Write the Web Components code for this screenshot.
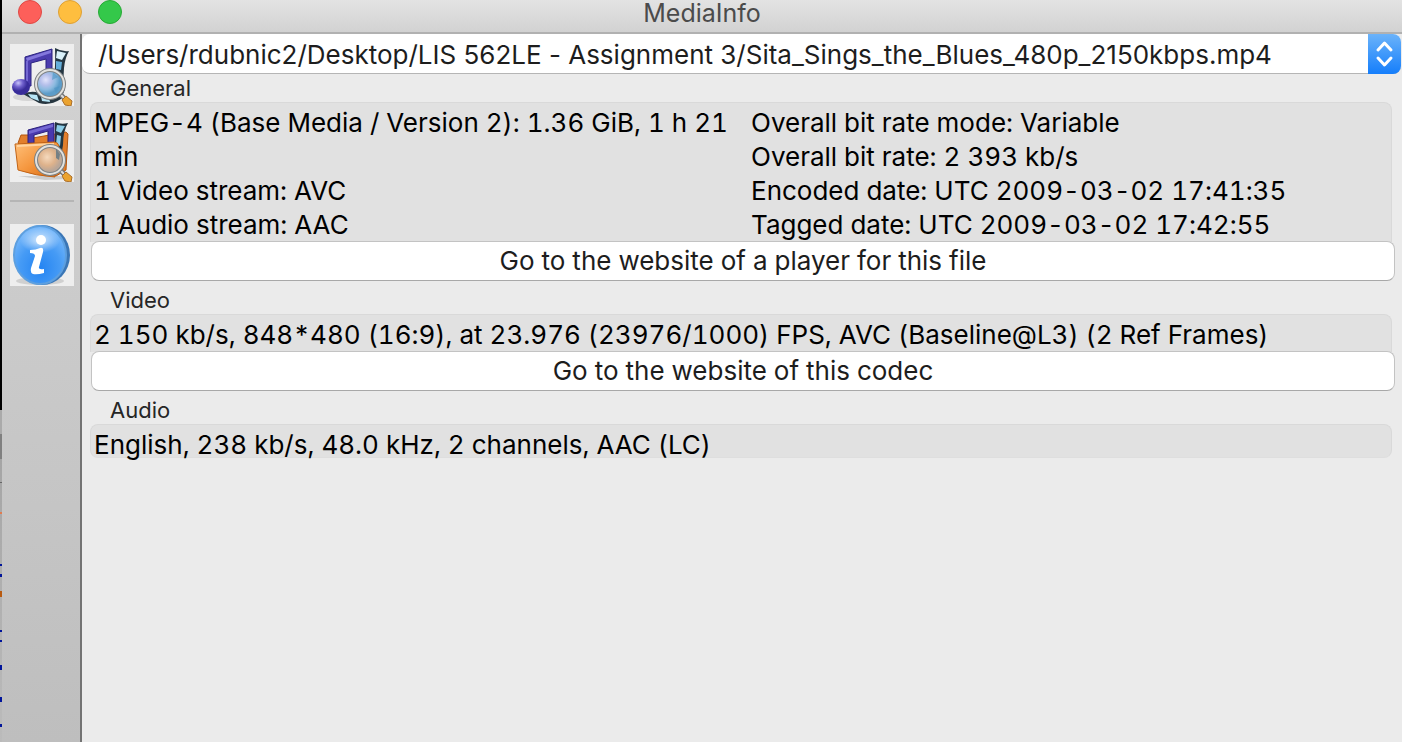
<!DOCTYPE html>
<html lang="en">
<head>
<meta charset="utf-8">
<title>MediaInfo</title>
<style>
html, body { height: 100%; margin: 0; }
body { font-family: Inter, Roboto, "Liberation Sans", sans-serif; font-size: 26px; font-variant-numeric: tabular-nums;
  font-variant-ligatures: no-contextual; color: #000; }
</style>
</head>
<body>
<media-window>
  <window-bar slot="bar">MediaInfo</window-bar>
  <tool-rail slot="rail"></tool-rail>
  <file-picker>/Users/rdubnic2/Desktop/LIS 562LE - Assignment 3/Sita_Sings_the_Blues_480p_2150kbps.mp4</file-picker>
  <info-group label="General" action="Go to the website of a player for this file">
    <info-lines>
      <div>MPEG-4 (Base Media / Version 2): 1.36 GiB, 1 h 21 min</div>
      <div>1 Video stream: AVC</div>
      <div>1 Audio stream: AAC</div>
    </info-lines>
    <info-lines>
      <div>Overall bit rate mode: Variable</div>
      <div>Overall bit rate: 2 393 kb/s</div>
      <div>Encoded date: UTC 2009-03-02 17:41:35</div>
      <div>Tagged date: UTC 2009-03-02 17:42:55</div>
    </info-lines>
  </info-group>
  <info-group label="Video" action="Go to the website of this codec" single>
    <info-lines><div>2 150 kb/s, 848*480 (16:9), at 23.976 (23976/1000) FPS, AVC (Baseline@L3) (2 Ref Frames)</div></info-lines>
  </info-group>
  <info-group label="Audio" single>
    <info-lines><div>English, 238 kb/s, 48.0 kHz, 2 channels, AAC (LC)</div></info-lines>
  </info-group>
</media-window>
<script>
class ShadowElement extends HTMLElement {
  connectedCallback() {
    if (this.shadowRoot) return;
    this.attachShadow({ mode: "open" }).innerHTML = this.view();
  }
}

customElements.define("media-window", class extends ShadowElement {
  view() { return `
    <style>
      :host { display: grid; grid-template: auto 1fr / 2px 80px 1fr; min-height: 100vh; background: #ebebeb; }
      .desk { grid-row: 1 / 3; background:
        linear-gradient(#00149a,#00149a) 0 564px/2px 2px no-repeat,
        linear-gradient(#00149a,#00149a) 0 574px/2px 3px no-repeat,
        linear-gradient(#b85a10,#b85a10) 0 591px/2px 6px no-repeat,
        linear-gradient(#00149a,#00149a) 0 630px/2px 2px no-repeat,
        linear-gradient(#00149a,#00149a) 0 640px/2px 2px no-repeat,
        linear-gradient(#00149a,#00149a) 0 665px/2px 5px no-repeat,
        linear-gradient(#00149a,#00149a) 0 697px/2px 5px no-repeat,
        linear-gradient(#00149a,#00149a) 0 724px/2px 3px no-repeat,
        linear-gradient(#e07b50,#e07b50) 0 512px/2px 2px no-repeat,
        linear-gradient(#666,#666) 0 482px/2px 1px no-repeat,
        linear-gradient(#000 410px,#aaa 410px,#aaa 434px,#808080 434px,#808080 459px,#a5a5a5 459px,#bbb); }
      .bar { grid-column: 2 / 4; }
      .rail { display: grid; }
      main { min-width: 0; padding-bottom: 20px; }
    </style>
    <div class="desk"></div>
    <div class="bar"><slot name="bar"></slot></div>
    <div class="rail"><slot name="rail"></slot></div>
    <main><slot></slot></main>`; }
});

customElements.define("window-bar", class extends ShadowElement {
  view() { return `
    <style>
      :host { display: grid; grid-template-columns: 1fr auto 1fr; height: 34px; box-sizing: border-box;
        border-bottom: 2px solid #b1b1b1; background: linear-gradient(#e3e3e3, #d2d2d2); color: #4b4b4b; }
      .lights { display: flex; gap: 16px; padding-left: 16px; }
      button { width: 24px; height: 24px; padding: 0; border-radius: 50%; border: 1px solid; }
      .close { background: #fd5f5a; border-color: #df4844; }
      .min { background: #febe3f; border-color: #dea034; }
      .max { background: #34c84a; border-color: #27aa35; }
      h1 { margin: 0; font-size: 25px; font-weight: 400; line-height: 26px; }
    </style>
    <div class="lights">
      <button class="close" aria-label="Close"></button>
      <button class="min" aria-label="Minimize"></button>
      <button class="max" aria-label="Zoom"></button>
    </div>
    <h1><slot></slot></h1>`; }
});

const film = `
  <path d="M45 4q7 4 14 3-4 7-5 17l-1 18-12 4q5-12 4-42z" fill="#243642"/>
  <path d="m47 7 9 2-4 7-6-2z" fill="#d9f1fa"/><path d="m46 17 6 1-1 8-5-1zM46 28l5 1-1 8-5-1z" fill="#64aeda"/>`;
const loupe = glass => `
  <path d="m50 50 5 5" stroke="#777" stroke-width="5"/>
  <path d="m50 50 5 5" stroke="#ddd" stroke-width="2"/>
  <path d="m56 52 6 5-1 5-6-1-3-5z" fill="#eba32f" stroke="#a96e2b"/>
  <circle cx="40" cy="40" r="14" fill="url(#${glass})" stroke="#7d8183" stroke-width="4"/>
  <circle cx="40" cy="40" r="14" fill="none" stroke="#e2e2df" stroke-width="2"/>`;

customElements.define("tool-rail", class extends ShadowElement {
  view() { return `
    <style>
      :host { display: flex; flex-direction: column; box-sizing: border-box; padding: 10px 6px 0 8px;
        border-right: 2px solid #737373; background: linear-gradient(#d3d3d3, #bebebe); }
      button { display: block; width: 64px; height: 62px; padding: 0; border: 0; background: #eee; flex: none; }
      .folder { margin-top: 14px; }
      hr { width: 64px; height: 2px; margin: 18px 0 22px; border: 0; background: #b5b5b5; flex: none; }
      svg { display: block; width: 64px; height: 62px; }
    </style>
    <button aria-label="Open file">
      <svg viewBox="0 0 64 62">
        <defs>
          <radialGradient id="lens" cx=".35" cy=".35"><stop offset="0" stop-color="#e2e4fb"/><stop offset=".4" stop-color="#b4bfea"/><stop offset=".7" stop-color="#8dbbe0"/><stop offset="1" stop-color="#5c9cc8"/></radialGradient>
          <radialGradient id="ball" cx=".35" cy=".25"><stop offset="0" stop-color="#c9c3fa"/><stop offset=".5" stop-color="#7061cd"/><stop offset="1" stop-color="#382c99"/></radialGradient>
        </defs>
        <ellipse cx="18" cy="53" rx="15" ry="4" fill="#d5d5d5"/>
        ${film}
        <path d="M13 50q9-4 16-1 14 6 26-4l-4 10q-11 7-22 4z" fill="#263640"/>
        <path d="m18 50 9 1 2 6-8-3zM31 52l8 2 1 4-8-1z" fill="#b7e5f6"/>
        <path d="M15 13 42 5v35h-6V15l-15 4v23h-6z" fill="#4b3cae" stroke="#2b2381"/>
        <path d="M16 14 41 6v3L17 17z" fill="#8377dc"/>
        <path d="M17 17v22" stroke="#7468d2" stroke-width="2"/>
        <ellipse cx="11" cy="43" rx="9" ry="8" fill="url(#ball)"/>
        ${loupe("lens")}
        <path d="m43 28 5 5-6 3zM44 44l6-2-4 7z" fill="#4d94c4" opacity=".6"/>
      </svg>
    </button>
    <button class="folder" aria-label="Open folder">
      <svg viewBox="0 0 64 62">
        <defs>
          <radialGradient id="warm-lens" cx=".4" cy=".4"><stop offset="0" stop-color="#f5d9bd"/><stop offset=".6" stop-color="#deb28b"/><stop offset="1" stop-color="#b9a698"/></radialGradient>
          <linearGradient id="front" x1="0" y1="0" x2="1" y2="1"><stop offset="0" stop-color="#ffc17b"/><stop offset=".5" stop-color="#f5973f"/><stop offset="1" stop-color="#d5660f"/></linearGradient>
        </defs>
        <path d="M8 56h42l7 3-22 1z" fill="#ccc"/>
        <path d="m8 23 3-8h9l3 3 33-6 2 2-2 36-10 6z" fill="#e27f2c" stroke="#b4560f"/>
        <path d="M18 10 44 3v20h-6V11l-14 4v8h-6z" fill="#4939ae" stroke="#2c217c"/>
        <path d="M19 11 43 4v3L19 14z" fill="#7468d2"/>
        <path d="M45 2q6 3 13 1-5 8-5 22l-2 12q-6-4-6-14z" fill="#243642"/>
        <path d="m47 5 8 1-4 7-5-2zM47 15l4 1-1 10-4-2z" fill="#8bcde8"/>
        <path d="m5 24 39-2q4 0 5 4l-4 31q-19-1-37-7z" fill="url(#front)" stroke="#c26417"/>
        <path d="m7 26 37-2" stroke="#ffd4a0" stroke-width="2"/>
        ${loupe("warm-lens")}
        <path d="m46 29 4 5-1 6-3-2z" fill="#4f6c80" opacity=".7"/>
      </svg>
    </button>
    <hr>
    <button aria-label="About">
      <svg viewBox="0 0 64 62">
        <defs>
          <radialGradient id="blue" cx=".5" cy=".72" r=".65"><stop offset="0" stop-color="#2484f2"/><stop offset=".6" stop-color="#469bf5"/><stop offset="1" stop-color="#72b5fa"/></radialGradient>
          <radialGradient id="shine"><stop offset="0" stop-color="#fff" stop-opacity=".75"/><stop offset="1" stop-color="#fff" stop-opacity="0"/></radialGradient>
        </defs>
        <ellipse cx="30" cy="57" rx="24" ry="4" fill="#d0d0d0"/>
        <ellipse cx="32" cy="31" rx="28" ry="30" fill="#3a76b6"/>
        <ellipse cx="30" cy="31" rx="26" ry="29" fill="url(#blue)" stroke="#5d9fdf" stroke-width="2"/>
        <ellipse cx="30" cy="16" rx="20" ry="13" fill="url(#shine)"/>
        <circle cx="31" cy="16" r="5" fill="#fff"/>
        <path d="M20 26q6 0 10-2 4-1 3 4l-4 15q-1 3 5 2v4q-7 2-11 1-3-1-2-6l4-12q0-3-5-3z" fill="#fff"/>
      </svg>
    </button>`; }
});

customElements.define("file-picker", class extends ShadowElement {
  view() { return `
    <style>
      :host { display: block; position: relative; height: 40px; margin-right: 1px; }
      select { appearance: none; display: block; width: 100%; height: 40px; padding: 1px 40px 0 16px; margin: 0;
        border: 0; border-bottom: 1px solid #b5b5b5; border-radius: 8px; background: #fff; color: #1d1d1d;
        font: inherit; font-variant-numeric: proportional-nums; }
      svg { position: absolute; top: 0; right: 0; width: 33px; height: 40px; border-radius: 0 8px 8px 0;
        background: linear-gradient(#6bb3fa, #157efb); pointer-events: none; }
    </style>
    <select aria-label="File"><option>${this.textContent}</option></select>
    <svg viewBox="0 0 33 40" fill="none" stroke="#fff" stroke-width="3" stroke-linecap="round" stroke-linejoin="round">
      <path d="m10 16 6.500-7 6.500 7M10 24l6.500 7 6.500-7"/>
    </svg>`; }
});

customElements.define("info-group", class extends ShadowElement {
  view() {
    const label = this.getAttribute("label"), action = this.getAttribute("action");
    return `
    <style>
      :host { display: block; padding: 0 7px 0 8px; }
      h2 { margin: 0; padding-left: 20px; font-size: 22px; font-weight: 400; line-height: 28px; color: #262626; }
      :host([single]) h2 { padding-top: 5px; }
      .box { display: grid; grid-template-columns: 1fr 1fr; column-gap: 20px; box-sizing: border-box;
        margin-right: 3px; padding: 3px 3px 0; border: 1px solid #d9d9d9; border-bottom-color: #dedede; border-radius: 8px;
        background: #e1e1e1; }
      :host([single]) .box { grid-template-columns: 1fr; height: 34px; }
      :host([action]) .box { border-bottom: 0; border-radius: 8px 8px 0 0; margin-bottom: -1px; }
      :host([action][single]) .box { height: 38px; }
      .action { display: grid; padding-left: 1px; }
      button { height: 40px; padding: 0 0 2px; border: 1px solid #c3c3c3; border-bottom-color: #a8a8a8;
        border-radius: 8px; background: #fff; color: #1d1d1d; font: inherit; }
    </style>
    <section aria-label="${label}">
      <h2>${label}</h2>
      <div class="box"><slot></slot></div>
      ${action ? `<div class="action"><button>${action}</button></div>` : ""}
    </section>`; }
});

customElements.define("info-lines", class extends ShadowElement {
  view() { return `
    <style>:host { display: block; line-height: 34px; }</style>
    <slot></slot>`; }
});
</script>
</body>
</html>
